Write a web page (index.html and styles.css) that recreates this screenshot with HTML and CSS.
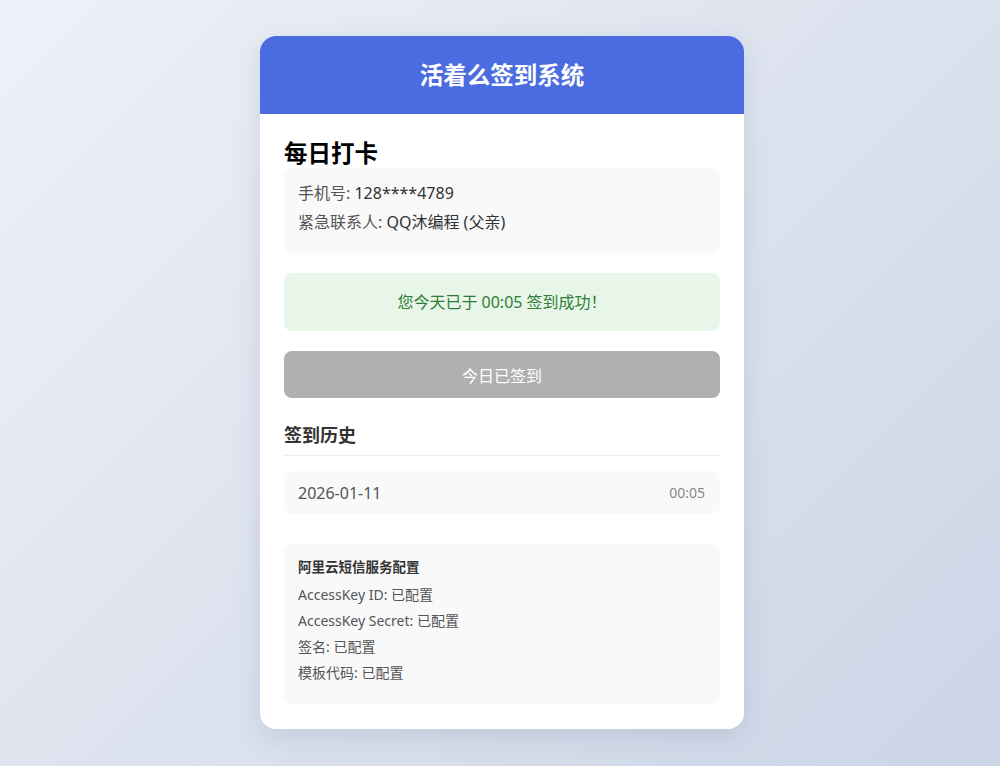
FILE: index.html
```html
<!DOCTYPE html>
<html lang="zh-CN">
<head>
<meta charset="utf-8">
<title>活着么签到系统</title>
<link rel="stylesheet" href="styles.css">
</head>
<body>
<div class="card">
  <div class="card-header">活着么签到系统</div>
  <div class="card-body">
    <h2 class="section-title">每日打卡</h2>
    <div class="info-box">
      <div class="info-line"><span class="label">手机号:</span> <span class="value">128****4789</span></div>
      <div class="info-line"><span class="label">紧急联系人:</span> <span class="value">QQ沐编程 (父亲)</span></div>
    </div>
    <div class="success-box">您今天已于 00:05 签到成功！</div>
    <button class="checkin-btn" disabled>今日已签到</button>
    <h3 class="history-title">签到历史</h3>
    <div class="history-item">
      <span class="history-date">2026-01-11</span>
      <span class="history-time">00:05</span>
    </div>
    <div class="config-box">
      <div class="config-title">阿里云短信服务配置</div>
      <div class="config-line">AccessKey ID: 已配置</div>
      <div class="config-line">AccessKey Secret: 已配置</div>
      <div class="config-line">签名: 已配置</div>
      <div class="config-line">模板代码: 已配置</div>
    </div>
  </div>
</div>
</body>
</html>
```
FILE: styles.css
```css
html, body {
  margin: 0;
  padding: 0;
}
body {
  min-height: 766px;
  background: linear-gradient(135deg, #edf1f8 0%, #dde3ee 50%, #cbd5e6 100%);
  font-family: "Noto Sans", "Noto Sans CJK SC", sans-serif;
  padding: 36px 0 0 4px;
  box-sizing: border-box;
}
.card {
  width: 484px;
  margin: 0 auto;
  background: #fff;
  border-radius: 16px;
  overflow: hidden;
  box-shadow: 0 8px 28px rgba(60, 80, 120, 0.14);
}
.card-header {
  height: 78px;
  line-height: 78px;
  background: #4a6ce0;
  color: #fff;
  text-align: center;
  font-size: 23.5px;
  font-weight: 700;
}
.card-body {
  padding: 24px 24px 25px;
}
.section-title {
  margin: 0;
  font-size: 23.5px;
  line-height: 30px;
  font-weight: 700;
  color: #000;
}
.info-box {
  background: #f9f9f9;
  border-radius: 8px;
  padding: 11px 14px 16px;
  font-size: 16px;
}
.info-line {
  line-height: 29px;
}
.label {
  color: #555;
}
.value {
  color: #333;
}
.success-box {
  margin-top: 20px;
  background: #e8f5e9;
  color: #2e7d32;
  border-radius: 8px;
  text-align: center;
  font-size: 16px;
  height: 58px;
  line-height: 58px;
}
.checkin-btn {
  display: block;
  width: 100%;
  margin-top: 20px;
  height: 47px;
  border: none;
  border-radius: 8px;
  background: #b0b0b0;
  color: #fff;
  font-family: inherit;
  font-size: 16px;
  padding: 0;
}
.history-title {
  margin: 24px 0 0;
  font-size: 18px;
  line-height: 26px;
  font-weight: 700;
  color: #333;
  padding-bottom: 7px;
  border-bottom: 1px solid #eee;
}
.history-item {
  margin-top: 15px;
  height: 43px;
  background: #f9f9f9;
  border-radius: 8px;
  display: flex;
  align-items: center;
  justify-content: space-between;
  padding: 0 15px 0 14px;
}
.history-date {
  font-size: 16px;
  color: #555;
}
.history-time {
  font-size: 14px;
  color: #888;
}
.config-box {
  margin-top: 30px;
  background: #f9f9f9;
  border-radius: 8px;
  padding: 10px 14px 18px;
  font-size: 14px;
  color: #555;
}
.config-title {
  font-weight: 700;
  font-size: 13.5px;
  color: #333;
  line-height: 26px;
  margin-bottom: 2px;
}
.config-line {
  line-height: 26px;
}
```
